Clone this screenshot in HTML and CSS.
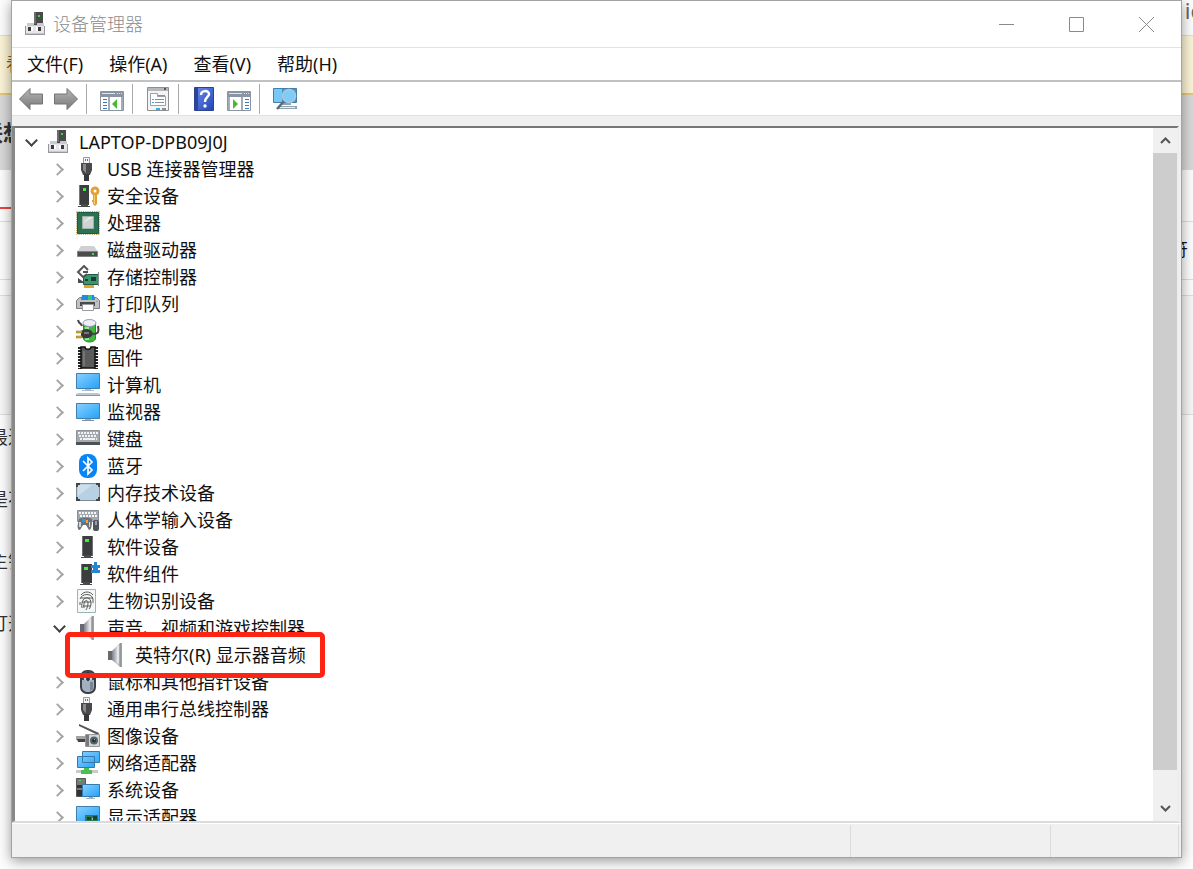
FILE: index.html
```html
<!DOCTYPE html>
<html lang="zh-CN">
<head>
<meta charset="utf-8">
<title>设备管理器</title>
<link rel="stylesheet" href="styles.css">
</head>
<body>
<svg class="sprite" aria-hidden="true">
  <defs>
    <linearGradient id="g-screen" x1="0" y1="0" x2="1" y2="1"><stop offset="0" stop-color="#8ad0ff"/><stop offset="1" stop-color="#22a2f7"/></linearGradient>
    <linearGradient id="g-arrow" x1="0" y1="0" x2="0" y2="1"><stop offset="0" stop-color="#b5b5b5"/><stop offset="1" stop-color="#787878"/></linearGradient>
    <linearGradient id="g-metal" x1="0" y1="0" x2="1" y2="0"><stop offset="0" stop-color="#7c8188"/><stop offset=".5" stop-color="#d5d8dc"/><stop offset="1" stop-color="#777b81"/></linearGradient>
    <linearGradient id="g-help" x1="0" y1="0" x2="1" y2="1"><stop offset="0" stop-color="#6d8df0"/><stop offset="1" stop-color="#2343b4"/></linearGradient>
    <symbol id="i-host" viewBox="0 0 24 24">
      <path fill="#4a4a4c" d="M9 0h9v13H9z"/><path fill="#6d6d6f" d="M9 0h2v12H9z"/><path fill="#35e03c" d="M13 3h2v2h-2z"/>
      <path fill="#c9cace" d="M2 11h7v2h3v-2h7v3h1v9H0v-9h2z"/><path fill="#e6e6ea" d="M1 14h18v7H1z"/><path fill="#97989d" d="M0 22h20v1H0zM0 14h1v8H0zM19 14h1v8h-1z"/>
      <path fill="#3a3a3c" d="M3 15h3v4H3zM13 15h3v4h-3z"/><path fill="#fff" d="M6 15h2v4H6zM11 15h2v4h-2z"/>
    </symbol>
    <symbol id="i-usb" viewBox="0 0 24 24">
      <path fill="#f3f3f3" stroke="#9b9b9b" d="M7.500.5h6v6h-6z"/><path fill="#777" d="M9 2h1v2H9zM11 2h1v2h-1z"/>
      <path fill="#4a4a4c" d="M5 6h11v7l-2 5H7l-2-5z"/><path fill="#8a8a8c" d="M7 7h3v9l-3-3z"/><path fill="#38383a" d="M8 17h5v7H8z"/>
    </symbol>
    <symbol id="i-tower" viewBox="0 0 24 24">
      <path fill="#3c3d3f" d="M6 1h10v20H6z"/><path fill="#6d6e70" d="M6 1h1v20H6zM16 1h1v20h-1z"/><path fill="#3cf03c" d="M9 4h4v3H9z"/><path fill="#4a4b4d" d="M8 20h7v2h2v1H5v-1h3z"/>
    </symbol>
    <symbol id="i-speaker" viewBox="0 0 24 24">
      <path fill="#656a70" d="M4 8h4v9H4z"/><path fill="url(#g-metal)" d="M8 8l8-8h2v24h-2l-8-7z"/><path fill="#e4e6e8" d="M13 3l2-1v19l-2-2z"/><path fill="#9da1a6" d="M17 0h1v24h-1z"/>
    </symbol>
    <symbol id="i-screen" viewBox="0 0 24 24"><path fill="url(#g-screen)" stroke="#3e7fae" d="M.5 3.500h23v15H.5z"/><path fill="#9ab4c8" d="M9 19h6v1H9z"/><path fill="#7d93a5" d="M6 20h12v1H6z"/></symbol>
  </defs>
</svg>

<div class="backdrop" aria-hidden="true">
  <div class="strip strip-tabs"><span></span><span class="tail-tabs">ic</span></div>
  <div class="strip strip-notice"><span class="lead-notice">看</span></div>
  <div class="strip strip-head"><span class="lead-head">联想</span></div>
  <div class="strip strip-nav"></div>
  <div class="strip strip-sub"></div>
  <div class="strip strip-title"><span></span><span class="tail-title">符</span></div>
  <div class="strip strip-gap"></div>
  <div class="strip strip-box"></div>
  <div class="strip strip-line">最近</div>
  <div class="strip strip-line">是不</div>
  <div class="strip strip-line">主锁</div>
  <div class="strip strip-line">打开</div>
</div>

<main class="window">
  <header class="titlebar">
    <svg class="icon"><use href="#i-host"/></svg>
    <h1 class="title">设备管理器</h1>
    <div class="caption">
      <button class="caption-btn" aria-label="最小化"><svg width="15" height="15"><path d="M0 7.500h15"/></svg></button>
      <button class="caption-btn" aria-label="最大化"><svg width="15" height="15"><path d="M.5.5h14v14H.5z"/></svg></button>
      <button class="caption-btn" aria-label="关闭"><svg width="15" height="15"><path d="M0 0l15 15M15 0L0 15"/></svg></button>
    </div>
  </header>

  <nav class="menubar">
    <button class="menu">文件(F)</button>
    <button class="menu">操作(A)</button>
    <button class="menu">查看(V)</button>
    <button class="menu">帮助(H)</button>
  </nav>

  <div class="toolbar" role="toolbar">
    <button class="tool" aria-label="后退"><svg class="icon" viewBox="0 0 24 24"><path fill="url(#g-arrow)" stroke="#737373" d="M.5 12L11 1.500V7h12.500v10H11v5.500z"/></svg></button>
    <button class="tool" aria-label="前进"><svg class="icon" viewBox="0 0 24 24"><path fill="url(#g-arrow)" stroke="#737373" d="M23.500 12L13 1.500V7H.5v10H13v5.500z"/></svg></button>
    <span class="sep"></span>
    <button class="tool" aria-label="显示/隐藏控制台树"><svg class="icon" viewBox="0 0 24 24"><path fill="#fff" stroke="#8b94a3" d="M.5 4.500h23v19H.5z"/><path fill="#8b94a3" d="M1 5h22v5H1z"/><path fill="#dfe4ec" d="M2 6h13v1H2zM17 6h1v1h-1zM19 6h1v1h-1zM21 6h1v1h-1z"/><path fill="#a4acb8" d="M8 10h2v13H8zM21 10h2v13h-2z"/><path fill="#3f78c0" d="M3 12h4v1H3zM3 15h4v1H3zM3 18h4v1H3zM3 21h4v1H3z"/><path fill="#46bb2c" d="M17 12v10l-5-5z"/></svg></button>
    <span class="sep"></span>
    <button class="tool" aria-label="属性"><svg class="icon" viewBox="0 0 24 24"><path fill="#f4f4f4" stroke="#8e8e8e" d="M1.500.5h21v23h-21z"/><path fill="#b5b8bd" d="M2 1h20v3H2z"/><path fill="#555" d="M18 1h2v2h-2z"/><path fill="#fff" stroke="#98a0aa" d="M4.500 18.500v-12h7v3h8v9z"/><path fill="#28b4ea" d="M6 12h2v1H6zM6 15h2v1H6zM10 21h4v2h-4z"/><path fill="#89909a" d="M9 12h9v1H9zM9 15h9v1H9zM12 8h7v1h-7zM16 21h4v2h-4z"/></svg></button>
    <span class="sep"></span>
    <button class="tool" aria-label="帮助"><svg class="icon" viewBox="0 0 24 24"><path fill="url(#g-help)" stroke="#2e438e" d="M2.500.5h19v23h-19z"/><path fill="#2b459d" d="M3 1h3v22H3z"/><path fill="none" stroke="#fff" stroke-width="2.500" d="M9 8c0-5 8-5 8-1 0 3-4 3-4 8"/><circle cx="13" cy="19" r="1.700" fill="#fff"/></svg></button>
    <button class="tool" aria-label="操作窗格"><svg class="icon" viewBox="0 0 24 24"><path fill="#fff" stroke="#8b94a3" d="M.5 4.500h23v19H.5z"/><path fill="#8b94a3" d="M1 5h22v5H1z"/><path fill="#dfe4ec" d="M2 6h13v1H2zM17 6h1v1h-1zM19 6h1v1h-1zM21 6h1v1h-1z"/><path fill="#a4acb8" d="M1 10h2v13H1zM14 10h2v13h-2z"/><path fill="#3f78c0" d="M18 12h4v1h-4zM18 15h4v1h-4zM18 18h4v1h-4zM18 21h4v1h-4z"/><path fill="#46bb2c" d="M6 12v10l5-5z"/></svg></button>
    <span class="sep"></span>
    <button class="tool" aria-label="扫描检测硬件改动"><svg class="icon" viewBox="0 0 24 24"><path fill="#2f9ee0" stroke="#3e7fae" d="M.5 1.500h23v14H.5z"/><path fill="#77c8f7" d="M1 2h8v13H1z"/><path fill="#8fa3b3" d="M9 16h9v2H9zM5 19h19v3H5z"/><path fill="#e8eef3" d="M7 20h15v1H7z"/><path stroke="#5f6b76" stroke-width="2.500" d="M12 13l-8 9"/><circle cx="16" cy="9" r="6.500" fill="#7dcdf8" stroke="#b5c5d0" stroke-width="1.500"/></svg></button>
  </div>

  <section class="pane">
    <ul class="tree" role="tree">
      <li role="treeitem" aria-expanded="true">
        <div class="row"><button class="twisty open" aria-label="折叠"></button><svg class="icon"><use href="#i-host"/></svg><span class="label">LAPTOP-DPB09J0J</span></div>
        <ul class="branch" role="group">
          <li><div class="row"><button class="twisty" aria-label="展开"></button><svg class="icon"><use href="#i-usb"/></svg><span class="label">USB 连接器管理器</span></div></li>
          <li><div class="row"><button class="twisty" aria-label="展开"></button><svg class="icon" viewBox="0 0 24 24"><path fill="#3c3d3f" d="M4 1h9v20H4z"/><path fill="#77787a" d="M3 1h1v20H3z"/><path fill="#3cf03c" d="M7 4h3v3H7z"/><path fill="#4a4b4d" d="M5 20h7v2h2v1H2v-1h3z"/><circle cx="19" cy="7" r="3" fill="none" stroke="#dfa23a" stroke-width="3"/><path fill="#dfa23a" d="M17 10h4v10l-2 2-2-2v-2h-1v-2h1z"/><path fill="#f6cf72" d="M18 11h1v9h-1z"/></svg><span class="label">安全设备</span></div></li>
          <li><div class="row"><button class="twisty" aria-label="展开"></button><svg class="icon" viewBox="0 0 24 24"><path fill="none" stroke="#b39b4a" stroke-dasharray="1 1.200" d="M.5.5h23v23H.5z"/><path fill="#2c7153" stroke="#1d5a40" d="M1.500 1.500h21v21h-21z"/><path fill="#d0d3d4" stroke="#9fb3a9" d="M6.500 5.500h11v12h-11z"/><path fill="#eceeee" d="M7 12l6-6h4z"/></svg><span class="label">处理器</span></div></li>
          <li><div class="row"><button class="twisty" aria-label="展开"></button><svg class="icon" viewBox="0 0 24 24"><path fill="#cfd0d2" d="M5 8h13l4 6H1z"/><path fill="#4b4c4e" stroke="#808184" d="M1.500 13.500h20v5h-20z"/><path fill="#36e83a" d="M16 15h2v2h-2z"/></svg><span class="label">磁盘驱动器</span></div></li>
          <li><div class="row"><button class="twisty" aria-label="展开"></button><svg class="icon" viewBox="0 0 24 24"><path fill="none" stroke="#555" stroke-width="2" d="M12 5L8 1 2 7l5 5 4-3M7 7h5"/><path fill="#4a4d50" d="M2 13l7 5H2z"/><path fill="#3f9470" stroke="#215b44" d="M7.500 12.500l4-3h11v10h-15z"/><path fill="#173f31" d="M15 12h5v4h-5zM9 14h3v2H9z"/><path fill="#e3a32e" d="M8 20h10v3H8z"/><path fill="#8b8e90" d="M22 7h1v14h-1z"/></svg><span class="label">存储控制器</span></div></li>
          <li><div class="row"><button class="twisty" aria-label="展开"></button><svg class="icon" viewBox="0 0 24 24"><path fill="#bfc1c4" stroke="#7c7e82" d="M.5 8.500l3-3h17l3 3v8H.5z"/><path fill="#1b8edf" d="M6 3h12l1 5H5z"/><path fill="#36c875" d="M12 3h4v5h-4z"/><path fill="#3fe24a" d="M20 9h2v1h-2z"/><path fill="#494a4c" d="M4 10h15v4H4z"/><path fill="#fff" stroke="#9b9da0" d="M6.500 12.500h11v6h-11z"/></svg><span class="label">打印队列</span></div></li>
          <li><div class="row"><button class="twisty" aria-label="展开"></button><svg class="icon" viewBox="0 0 24 24"><path fill="#3bb83e" stroke="#278a2e" d="M7.500 5h12v15c-2 4-10 4-12 0z"/><path fill="#9be896" d="M9 8h4v13H9z"/><ellipse cx="13.500" cy="4" rx="6.500" ry="3.500" fill="#eeeef8" stroke="#9a9aac"/><path fill="#39393b" d="M5 12c7-4 11-1 12 3-2 5-8 5-12 3z"/><path fill="none" stroke="#444" stroke-width="2" d="M17 15c6 0 6-3 5-8M2 1c1 4 3 3 4 6"/><path fill="#d8b133" stroke="#81661b" stroke-width=".5" d="M0 12h6v2H0zM0 17h6v2H0z"/><path fill="#77777a" d="M8 13h5v2H8z"/></svg><span class="label">电池</span></div></li>
          <li><div class="row"><button class="twisty" aria-label="展开"></button><svg class="icon" viewBox="0 0 24 24"><path fill="none" stroke="#222" stroke-width="4" stroke-dasharray="2 1" d="M4 1v22M20 1v22"/><path fill="#5a5a5b" stroke="#111" stroke-width="1.500" d="M5 1h4c0 3 6 3 6 0h4v21H5z"/><path fill="#747475" d="M7 5h2v15H7z"/><path stroke="#f2f2f2" stroke-dasharray="1 2" d="M3.500 3v19M20.500 3v19"/></svg><span class="label">固件</span></div></li>
          <li><div class="row"><button class="twisty" aria-label="展开"></button><svg class="icon" viewBox="0 0 24 24"><path fill="url(#g-screen)" stroke="#3e7fae" d="M.5.5h23v15H.5z"/><path fill="#a7bdce" d="M9 16h6v1H9zM6 17h12v1H6z"/><path fill="#b9c8d4" d="M2 20h20l2 1v1H0v-1z"/><path fill="#8398a9" d="M0 22h24v1H0z"/></svg><span class="label">计算机</span></div></li>
          <li><div class="row"><button class="twisty" aria-label="展开"></button><svg class="icon"><use href="#i-screen"/></svg><span class="label">监视器</span></div></li>
          <li><div class="row"><button class="twisty" aria-label="展开"></button><svg class="icon" viewBox="0 0 24 24"><path fill="#a4aab0" stroke="#8c9298" d="M.5 3.500h23v12H.5z"/><path stroke="#f1f3f5" stroke-width="2" stroke-dasharray="2 1" d="M2 6h20M3 9h18M4 12h3M17 12h4"/><path fill="#eff1f3" d="M7 11h10v2H7z"/><path fill="#4c5157" d="M0 15h24v3H0z"/></svg><span class="label">键盘</span></div></li>
          <li><div class="row"><button class="twisty" aria-label="展开"></button><svg class="icon" viewBox="0 0 24 24"><rect x="3" width="18" height="24" rx="8" fill="#0a84f5"/><path fill="none" stroke="#fff" stroke-width="1.700" d="M7 7l9 9-4 4V4l4 4-9 9"/></svg><span class="label">蓝牙</span></div></li>
          <li><div class="row"><button class="twisty" aria-label="展开"></button><svg class="icon" viewBox="0 0 24 24"><rect x=".5" y="2.500" width="23" height="17" rx="1.500" fill="#b7d1e2" stroke="#7c8c98"/><path fill="#cbdfec" d="M2 4h14L2 15z"/><path fill="none" stroke="#444" stroke-width="2" d="M1 6V3h3M20 3h3v3M1 16v3h3M20 19h3v-3"/></svg><span class="label">内存技术设备</span></div></li>
          <li><div class="row"><button class="twisty" aria-label="展开"></button><svg class="icon" viewBox="0 0 24 24"><path fill="#a3a8ae" stroke="#888e95" d="M1.500 2.500h21v11h-21z"/><path stroke="#f4f5f6" stroke-width="2" stroke-dasharray="2 1" d="M3 5h18M4 8h17"/><path fill="#6c7279" d="M3 11c3-2 10-2 13 0 0 4 0 11-3 11l-3-5H7l-3 5c-4 0-2-7-1-11z"/><path fill="#279ce2" d="M6 11h4v3H6z"/><path fill="#f0a33a" d="M10 12h2v3h-2z"/><path fill="#d3d7db" d="M3 14h2v5H3zM13 14h1v5h-1z"/><rect x="17" y="12" width="6" height="11" rx="2" fill="#50565d"/><path fill="#9aa0a7" d="M19 13h2v4h-2z"/></svg><span class="label">人体学输入设备</span></div></li>
          <li><div class="row"><button class="twisty" aria-label="展开"></button><svg class="icon"><use href="#i-tower"/></svg><span class="label">软件设备</span></div></li>
          <li><div class="row"><button class="twisty" aria-label="展开"></button><svg class="icon" viewBox="0 0 24 24"><path fill="#3c3d3f" d="M6 2h10v19H6z"/><path fill="#77787a" d="M5 2h1v19H5z"/><path fill="#3cf03c" d="M8 5h4v3H8z"/><path fill="#4a4b4d" d="M7 20h7v2h2v1H4v-1h3z"/><path fill="#2786cd" d="M15 3h3V0h3v3h3v3h-2v2h2v3h-9V8h2V6h-2z"/></svg><span class="label">软件组件</span></div></li>
          <li><div class="row"><button class="twisty" aria-label="展开"></button><svg class="icon" viewBox="0 0 24 24"><path fill="#f5f8f7" stroke="#9bb7b1" d="M1.500.5h18v23h-18z"/><path fill="none" stroke="#555b5a" d="M5 6c3-4 9-4 12 0M4 10c2-6 12-6 13 0v4M6 19c-2-12 9-13 9-5 0 3-1 5-2 6M8 19c-1-9 4-9 4-5 0 3-1 5-2 7M4 13v3M5 9h12M6 13h9M7 17h8"/></svg><span class="label">生物识别设备</span></div></li>
          <li role="treeitem" aria-expanded="true">
            <div class="row"><button class="twisty open" aria-label="折叠"></button><svg class="icon"><use href="#i-speaker"/></svg><span class="label">声音、视频和游戏控制器</span></div>
            <ul class="branch" role="group">
              <li><div class="row marked"><span class="twisty"></span><svg class="icon"><use href="#i-speaker"/></svg><span class="label">英特尔(R) 显示器音频</span></div></li>
            </ul>
          </li>
          <li><div class="row"><button class="twisty" aria-label="展开"></button><svg class="icon" viewBox="0 0 24 24"><rect x="5" y="1" width="14" height="22" rx="6" fill="#a3b0c0" stroke="#3c3f43" stroke-width="2"/><path fill="#3f4855" d="M6 4l4-3h4l4 3v6H6z"/><path fill="#c7d1de" d="M8 4h2v6H8zM14 4h2v6h-2z"/><path fill="#30353c" d="M11 2h2v9h-2z"/><path fill="#75869b" d="M14 12h3v7l-3 2z"/></svg><span class="label">鼠标和其他指针设备</span></div></li>
          <li><div class="row"><button class="twisty" aria-label="展开"></button><svg class="icon"><use href="#i-usb"/></svg><span class="label">通用串行总线控制器</span></div></li>
          <li><div class="row"><button class="twisty" aria-label="展开"></button><svg class="icon" viewBox="0 0 24 24"><path fill="#555" d="M3 0l20 9-1 2L3 2z"/><path fill="#a3a4a6" d="M0 12h10v4H0z"/><path fill="#444" d="M1 15h8v3H2z"/><path fill="#d4d5d7" stroke="#98999b" d="M9.500 10.500h14v12h-14z"/><path fill="#78797b" d="M10 11h3v11h-3z"/><circle cx="18" cy="16.500" r="4" fill="#56656b"/><circle cx="18" cy="16.500" r="2" fill="#20373d"/><path fill="#8dc5c6" d="M18 15h1v1h-1z"/></svg><span class="label">图像设备</span></div></li>
          <li><div class="row"><button class="twisty" aria-label="展开"></button><svg class="icon" viewBox="0 0 24 24"><path fill="url(#g-screen)" stroke="#347aaa" d="M6.500.5h17v11h-17zM1.500 5.500h17v11h-17z"/><path fill="#c8cbcd" d="M0 19h22v3H0z"/><path fill="#48c14d" d="M8 17h5v2h3v4H5v-4h3z"/></svg><span class="label">网络适配器</span></div></li>
          <li><div class="row"><button class="twisty" aria-label="展开"></button><svg class="icon" viewBox="0 0 24 24"><path fill="#78797b" stroke="#555" d="M.5.5h9v18h-9z"/><path fill="#46e947" d="M3 2h2v1H3z"/><path fill="#333" d="M1 7h5v3H1zM1 12h5v6H1z"/><path fill="url(#g-screen)" stroke="#347aaa" d="M6.500 6.500h17v12h-17z"/><path fill="#9eb2c2" d="M13 19h4v1h-4zM10 20h9v1h-9z"/></svg><span class="label">系统设备</span></div></li>
          <li><div class="row"><button class="twisty" aria-label="展开"></button><svg class="icon" viewBox="0 0 24 24"><path fill="url(#g-screen)" stroke="#3e7fae" d="M.5 1.500h23v15H.5z"/><path fill="#2d7d5b" d="M9 10h13v8H9z"/><path fill="#174734" d="M11 12h4v3h-4zM17 11h4v4h-4z"/><path fill="#9bc2ad" d="M16 13h1v2h-1z"/></svg><span class="label">显示适配器</span></div></li>
        </ul>
      </li>
    </ul>
    <div class="scrollbar">
      <button class="scroll-btn" aria-label="向上滚动"><svg width="11" height="7"><path d="M1 6l4.500-4.500L10 6"/></svg></button>
      <div class="track"><div class="thumb"></div></div>
      <button class="scroll-btn" aria-label="向下滚动"><svg width="11" height="7"><path d="M1 1l4.500 4.500L10 1"/></svg></button>
    </div>
  </section>

  <footer class="statusbar"><span></span><span></span><span></span></footer>
</main>
</body>
</html>
```
FILE: styles.css
```css
* { box-sizing: border-box; }

body {
  margin: 0;
  height: 100vh;
  overflow: hidden;
  position: relative;
  background: #fdfdfd;
  color: #111;
  font: 18px/27px "Noto Sans", "Noto Sans CJK SC", sans-serif;
}

button {
  padding: 0;
  border: 0;
  background: none;
  color: inherit;
  font: inherit;
}

ul { margin: 0; padding: 0; list-style: none; }

.sprite { position: absolute; width: 0; height: 0; }
.icon { display: block; flex: none; width: 24px; height: 24px; }

/* Page behind the window */
.backdrop { display: flex; flex-direction: column; height: 100%; overflow: hidden; }
.strip {
  display: flex;
  flex: none;
  align-items: center;
  justify-content: space-between;
  white-space: nowrap;
}
.strip-tabs { height: 36px; border-bottom: 1px solid #dcdcdc; align-items: flex-start; color: #666; }
.tail-tabs { margin-right: -8px; font-size: 22px; line-height: 20px; }
.strip-notice { height: 59px; background: #fbf3d5; border-bottom: 2px solid #e3c877; color: #8a5a10; }
.lead-notice { margin-left: 6px; }
.strip-head { height: 75px; background: #d9d9d9; font-size: 22px; font-weight: 700; color: #333; }
.lead-head { margin-left: -19px; }
.strip-nav {
  height: 39px;
  border-bottom: 2px solid;
  border-image: linear-gradient(to right, #e8453c 50%, transparent 50%) 1;
}
.strip-sub { height: 13px; border-bottom: 1px solid #ddd; }
.strip-title { height: 58px; padding-bottom: 2px; border-bottom: 1px solid #ddd; }
.tail-title { margin-right: 5px; }
.strip-gap { height: 16px; border-bottom: 1px solid #ddd; }
.strip-box { height: 119px; background: #f7f7f7; border-bottom: 1px solid #ddd; }
.strip-line { height: 62px; padding-bottom: 17px; margin-left: -10px; color: #333; }

/* Window frame */
.window {
  position: absolute;
  inset: 0 11px 11px 11px;
  display: flex;
  flex-direction: column;
  border: 1px solid #a3a3a3;
  background: #f0f0f0;
  box-shadow: 0 3px 12px rgba(0, 0, 0, .4);
}

.titlebar {
  display: flex;
  align-items: center;
  gap: 4px;
  height: 47px;
  padding-left: 13px;
  border-bottom: 1px solid #e3e3e3;
  background: #fff;
}
.title { margin: 0; color: #8c8c8c; font-size: 18px; font-weight: 300; }
.caption { display: flex; align-self: stretch; margin-left: auto; }
.caption-btn { display: grid; place-items: center; width: 70px; }
.caption-btn path { fill: none; stroke: #8a8a8a; }

.menubar {
  display: flex;
  align-items: center;
  gap: 26px;
  height: 34px;
  padding-left: 15px;
  border-bottom: 2px solid #bfc1c3;
  background: #fff;
}

.toolbar {
  display: flex;
  align-items: center;
  gap: 1px;
  height: 34px;
  padding-left: 2px;
  border-bottom: 1px solid #e0e0e0;
  background: #fff;
}
.tool { display: grid; place-items: center; width: 34px; height: 32px; padding-top: 1px; }
.sep { width: 1px; height: 30px; margin: 0 7px 0 2px; background: #a9a9a9; }

/* Device tree */
.pane {
  display: flex;
  flex: 1;
  min-height: 0;
  margin: 10px 2px 0 0;
  border: solid;
  border-width: 2px 2px 1px 3px;
  border-color: #777 #eee #ddd #888;
  background: #fff;
}
.tree { flex: 1; min-width: 0; overflow: hidden; padding-left: 4px; }
.branch { padding-left: 28px; }
.row { display: flex; align-items: center; height: 27px; white-space: nowrap; }
.row .icon { margin: 1px 7px 0 5px; }
.label { padding-top: 1px; }
.twisty { display: grid; place-items: center; flex: none; width: 24px; height: 24px; }
button.twisty::before {
  content: "";
  width: 7px;
  height: 7px;
  margin: 2px 4px 0 0;
  border: solid #a6a6a6;
  border-width: 2px 2px 0 0;
  transform: rotate(45deg);
}
button.twisty.open::before {
  margin: 0 0 2px;
  border-color: #404040;
  transform: rotate(135deg);
}

/* Red call-out around the highlighted device */
.marked { position: relative; width: max-content; }
.marked::after {
  content: "";
  position: absolute;
  inset: -9px -19px -10px -10px;
  border: 5px solid #fd2412;
  border-radius: 5px;
}

.scrollbar { display: flex; flex-direction: column; width: 24px; background: #f0f0f0; }
.scroll-btn { display: grid; place-items: center; height: 25px; }
.scroll-btn path { fill: none; stroke: #555; stroke-width: 2; }
.track { flex: 1; }
.thumb { height: 96%; background: #cdcdcd; }

.statusbar {
  display: grid;
  grid-template-columns: 1fr 200px 128px;
  height: 35px;
  padding: 2px 2px 0 0;
  border-top: 1px solid #d9d9d9;
  box-shadow: inset 0 1px #fff;
}
.statusbar span { border-right: 1px solid #dadada; }
```
